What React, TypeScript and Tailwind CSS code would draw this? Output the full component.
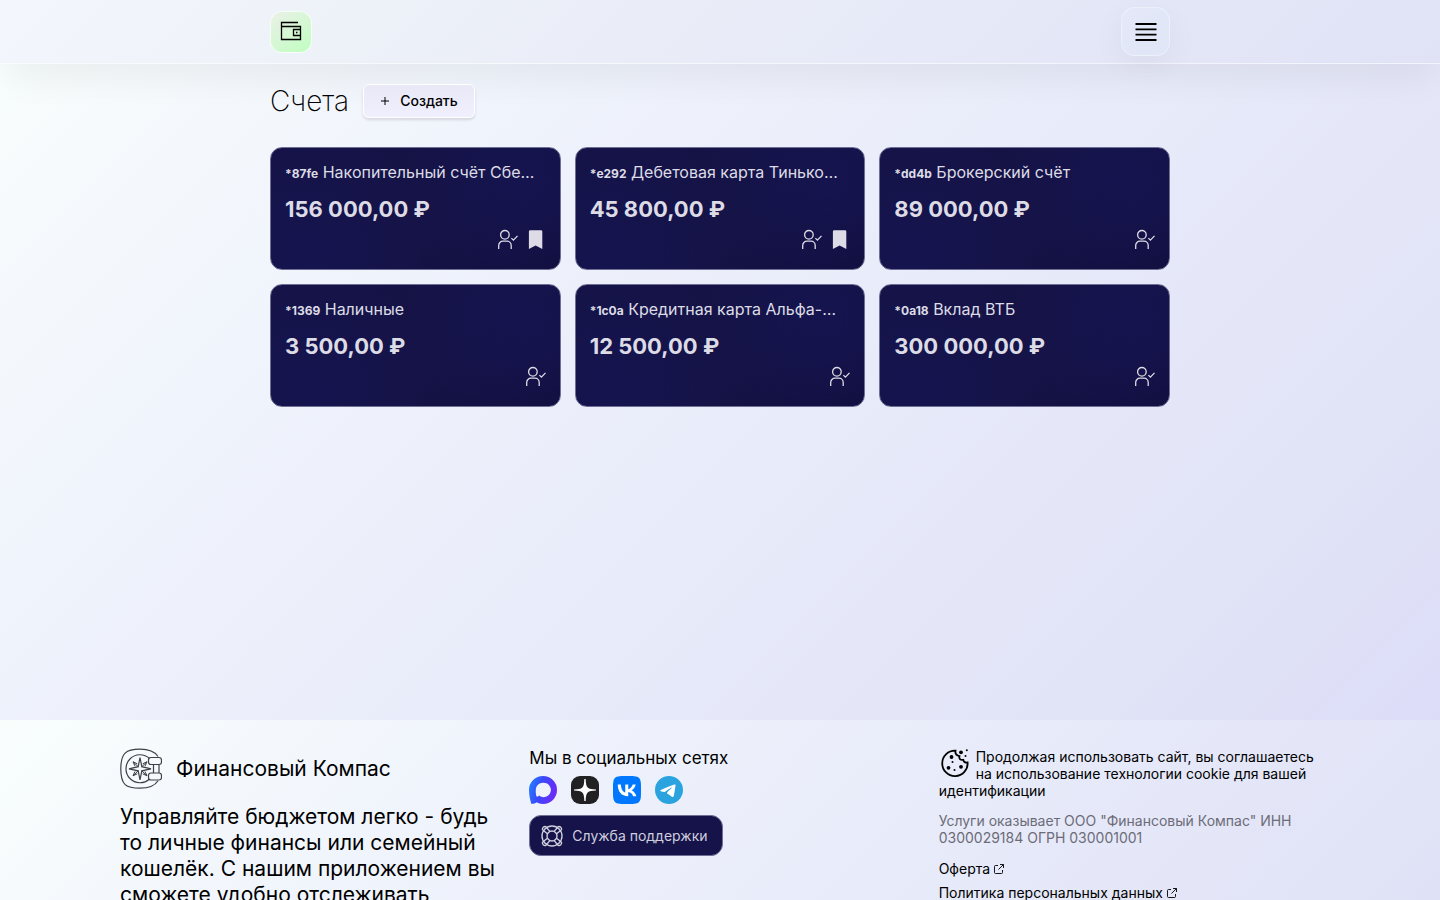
import React from 'react';
import { SiTelegram, SiVk } from 'react-icons/si';

interface Account {
  code: string;
  name: string;
  amount: string;
  saved?: boolean;
}

const accounts: Account[] = [
  { code: '87fe', name: 'Накопительный счёт Сбе…', amount: '156 000,00 ₽', saved: true },
  { code: 'e292', name: 'Дебетовая карта Тинько…', amount: '45 800,00 ₽', saved: true },
  { code: 'dd4b', name: 'Брокерский счёт', amount: '89 000,00 ₽' },
  { code: '1369', name: 'Наличные', amount: '3 500,00 ₽' },
  { code: '1c0a', name: 'Кредитная карта Альфа-…', amount: '12 500,00 ₽' },
  { code: '0a18', name: 'Вклад ВТБ', amount: '300 000,00 ₽' },
];

const WalletIcon = () => (
  <svg className="w-[22px] h-[22px] mb-0.5" viewBox="0 0 22 22" fill="none" stroke="currentColor" strokeWidth="1.3">
    <path d="M18 2.500H1.500v17h19v-13h-19M20.500 9.500h-7v6h7" />
    <path d="M16 12.500h1.500" />
  </svg>
);

const MenuIcon = () => (
  <svg className="w-6 h-6" viewBox="0 0 24 24" fill="none" stroke="currentColor" strokeWidth="1.8">
    <path d="M1.500 4h21M1.500 9.300h21M1.500 14.700h21M1.500 20h21" />
  </svg>
);

const UserCheckIcon = () => (
  <svg className="w-5 h-5" viewBox="0 0 20 20" fill="none" stroke="currentColor" strokeWidth="1.3">
    <circle cx="6.900" cy="5.800" r="4.300" />
    <path d="M.7 20v-3.600a4.200 4.200 0 0 1 4.200-4.200h4.100a4.200 4.200 0 0 1 4.200 4.200V20" />
    <path d="m13.400 9.100 2 2 4.100-4.200" />
  </svg>
);

const BookmarkIcon = () => (
  <svg className="w-5 h-5" viewBox="0 0 20 20" fill="currentColor">
    <path d="M4.100 1.300h11q1.200 0 1.200 1.200v17.400l-6.700-3.400-6.700 3.400V2.500q0-1.200 1.200-1.200z" />
  </svg>
);

const SafeLogo = () => (
  <svg className="w-[42px] h-[42px]" viewBox="0 0 42 42" fill="none" stroke="#3f3f46" strokeWidth="1.2">
    <path d="M38 8.500C34 2.500 27 1.200 20 1.200 6 1.200.8 5 .8 21S6 40.200 20 40.200c7 0 14-1 18-7.500" />
    <path d="M29.500 10.500A14 14 0 1 0 29.500 31" />
    <path d="M31 9.500h8q2.500 0 2.500 2.500v2q0 2.500-2.500 2.500h-8q-2.500 0-2.500-2.500v-2q0-2.500 2.500-2.500zM31 25h8q2.500 0 2.500 2.500v2q0 2.500-2.500 2.500h-8q-2.500 0-2.500-2.500v-2Q28.500 25 31 25zM33.500 16.500V25M39 16.500V25" />
    <path d="m20 9.500 1.800 9.200L31 20.800l-9.200 2L20 32l-1.800-9.200-9.200-2 9.200-2.100z" />
    <path d="m13 13.800 5.200 4.900M13 13.800l4.300 2M13 13.800l2 4.300M27 13.800l-5.200 4.900M27 13.800l-4.300 2M27 13.800l-2 4.300M13 27.800l5.200-5M13 27.800l4.300-2M13 27.800l2-4.300M27 27.800l-5.200-5M27 27.800l-4.300-2M27 27.800l-2-4.300" strokeWidth="1" />
  </svg>
);

const MaxIcon = () => (
  <svg className="w-7 h-7" viewBox="0 0 28 28">
    <defs>
      <linearGradient id="max-fill" x1="0" y1="0" x2="1" y2="0.3">
        <stop offset="0" stopColor="#1f8aff" />
        <stop offset="0.5" stopColor="#3a48fb" />
        <stop offset="1" stopColor="#6a2cf8" />
      </linearGradient>
    </defs>
    <path
      fill="url(#max-fill)"
      fillRule="evenodd"
      d="M14 0a14 14 0 1 1 0 28c-3 0-4.600-.5-6.200-1.700C6.500 27.500 4.200 28 2.400 28 1.500 25 0 20 0 14A14 14 0 0 1 14 0zm0 6.800c-4 0-7 3.100-7.200 7-.2 3 .3 6.700 1.300 7 .6.100 1.500-.6 2.100-1.200a7.200 7.200 0 1 0 3.800-12.800z"
    />
  </svg>
);

const DzenIcon = () => (
  <svg className="w-7 h-7" viewBox="0 0 28 28">
    <rect width="28" height="28" rx="9" fill="#212124" />
    <path fill="#fff" d="M13.300 3h1.400c.1 4.500.5 7 2 8.600 1.600 1.500 4 1.900 8.300 2v.9c-4.300.1-6.700.5-8.300 2-1.500 1.600-1.900 4-2 8.500h-1.400c-.1-4.500-.5-6.900-2-8.500-1.600-1.500-4-1.900-8.300-2v-.9c4.300-.1 6.700-.5 8.300-2 1.500-1.600 1.900-4.100 2-8.600z" />
  </svg>
);

const LifebuoyIcon = () => (
  <svg className="w-6 h-6" viewBox="0 0 24 24" fill="none" stroke="currentColor" strokeWidth="1.400">
    <circle cx="12" cy="12" r="10" />
    <circle cx="12" cy="12" r="5" />
    <path d="M7.400 9.800 2.800 6Q1.800 5 3 3.600q1.800-1.800 3-.8l3.800 4.600M16.600 9.800 21.200 6q1-1-.2-2.400-1.800-1.800-3-.8l-3.800 4.600M7.400 14.200 2.800 18q-1 1 .2 2.400 1.800 1.800 3 .8l3.800-4.600M16.600 14.200l4.600 3.800q1 1-.2 2.400-1.800 1.800-3 .8l-3.800-4.600" />
  </svg>
);

const CookieIcon = () => (
  <svg className="w-[30px] h-[30px]" viewBox="0 0 30 30" fill="none" stroke="currentColor" strokeWidth="1.800">
    <path d="M16.500 2.700A12.700 12.700 0 1 0 28.600 14.500c-2.200.5-4-.6-4.300-2.700-3.100.5-4.500-1.200-3.800-3.700-2.800-.5-4.500-2.600-4-5.400z" />
    <g fill="currentColor" stroke="none">
      <circle cx="12.500" cy="9" r="1.900" />
      <circle cx="9.500" cy="19.800" r="1.900" />
      <circle cx="22" cy="18.800" r="1.900" />
      <circle cx="22" cy="4.300" r="1.900" />
      <circle cx="27.800" cy="2.200" r="1" />
      <circle cx="26.500" cy="8" r="1" />
      <circle cx="13.500" cy="14" r="1" />
      <circle cx="15.500" cy="22" r="1" />
    </g>
  </svg>
);

const ExternalIcon = () => (
  <svg className="w-2.5 h-2.5" viewBox="0 0 10 10" fill="none" stroke="currentColor" strokeWidth="0.9">
    <path d="M4 1.500H1.500q-1 0-1 1v6q0 1 1 1h6q1 0 1-1V6M6 .5h3.500V4M9.500.5l-5 5" />
  </svg>
);

const AccountCard: React.FC<{ account: Account }> = ({ account }) => (
  <a
    href="#account"
    className="block min-w-0 h-[123px] p-[14px] rounded-xl border border-[#6f6e94] text-[#dddce6] bg-[radial-gradient(circle_at_88%_28%,#15144f_0%,transparent_45%),radial-gradient(circle_at_12%_85%,#15144f_0%,transparent_45%),linear-gradient(135deg,#151346_60%,#110d3c_100%)]"
  >
    <div className="truncate text-base leading-5">
      <b className="text-xs font-bold">*{account.code}</b> {account.name}
    </div>
    <div className="mt-[14px] text-[22px] leading-[26px] font-bold">{account.amount}</div>
    <div className="mt-[7px] flex justify-end gap-2">
      <UserCheckIcon />
      {account.saved && <BookmarkIcon />}
    </div>
  </a>
);

const App: React.FC = () => {
  return (
    <div className="h-screen overflow-hidden font-['Inter','Liberation_Sans',sans-serif] text-black">
      <div className="min-h-[80vh] bg-[linear-gradient(135deg,#f9fefd_0%,#f0f4fc_27%,#e7eaf9_60%,#dfe1f6_90%,#dcdcf9_100%)]">
        {/* Header */}
        <header className="h-16 border-b border-white/60 bg-[linear-gradient(135deg,#f3f7fd_0%,#edf1f8_25%,#e4e7f7_75%,#e0e3f6_100%)] shadow-[0_20px_36px_-6px_rgba(0,0,0,0.06)]">
          <div className="max-w-[900px] h-full mx-auto flex items-center justify-between">
            <a
              href="#home"
              aria-label="Главная"
              className="w-[42px] h-[42px] flex items-center justify-center rounded-xl border border-white/80 bg-[linear-gradient(145deg,#ebf0e8_0%,#c4fdc4_90%)]"
            >
              <WalletIcon />
            </a>
            <button
              type="button"
              aria-label="Меню"
              className="w-[49px] h-[49px] flex items-center justify-center rounded-[14px] border border-white/40 bg-[linear-gradient(135deg,#e5e8f8,#dfe6f6)] shadow-[0_8px_32px_rgba(0,0,0,0.05)]"
            >
              <MenuIcon />
            </button>
          </div>
        </header>

        {/* Accounts */}
        <main className="max-w-[900px] mx-auto pt-5">
          <div className="flex items-center gap-[14px] mb-[29px]">
            <h1 className="text-[28px] leading-8 font-extralight">Счета</h1>
            <button
              type="button"
              className="h-[34px] px-4 flex items-center gap-2.5 rounded-md border border-white bg-[linear-gradient(180deg,#e8e8f7,#f0effd)] text-sm font-medium shadow-[0_2px_3px_rgba(0,0,0,0.12)]"
            >
              <svg className="w-[10px] h-[10px]" viewBox="0 0 10 10" stroke="currentColor" strokeWidth="1">
                <path d="M5 1v8M1 5h8" />
              </svg>
              Создать
            </button>
          </div>
          <div className="grid grid-cols-3 gap-[14px]">
            {accounts.map((account) => (
              <AccountCard key={account.code} account={account} />
            ))}
          </div>
        </main>
      </div>

      {/* Footer */}
      <footer className="pt-7 pb-48 bg-[linear-gradient(135deg,#f9fefd_0%,#f0f4fc_27%,#e7eaf9_60%,#dfe1f6_90%,#dcdcf9_100%)]">
        <div className="max-w-[1200px] mx-auto grid grid-cols-3 gap-7">
          <div>
            <div className="flex items-center gap-[14px] text-[21px]">
              <SafeLogo />
              Финансовый Компас
            </div>
            <p className="mt-[14px] text-[21px] leading-[26px]">
              Управляйте бюджетом легко - будь то личные финансы или семейный кошелёк. С нашим
              приложением вы сможете удобно отслеживать
            </p>
          </div>

          <div>
            <div className="text-[17px] leading-5">Мы в социальных сетях</div>
            <div className="mt-2 flex gap-[14px]">
              <a href="#max" aria-label="MAX"><MaxIcon /></a>
              <a href="#dzen" aria-label="Дзен"><DzenIcon /></a>
              <a href="#vk" aria-label="ВКонтакте" className="rounded-lg bg-white">
                <SiVk className="w-7 h-7 text-[#0077ff]" />
              </a>
              <a href="#telegram" aria-label="Telegram" className="rounded-full bg-white">
                <SiTelegram className="w-7 h-7 text-[#2aa3df]" />
              </a>
            </div>
            <button
              type="button"
              className="mt-[11px] h-[41px] pl-[10px] pr-[14px] flex items-center gap-2 rounded-xl border border-[#6f6e94] bg-[#15134a] text-sm text-[#cfcede]"
            >
              <LifebuoyIcon />
              Служба поддержки
            </button>
          </div>

          <div className="text-sm leading-[17px]">
            <p>
              <span className="float-left mr-[7px]"><CookieIcon /></span>
              Продолжая использовать сайт, вы соглашаетесь на использование технологии cookie для
              вашей идентификации
            </p>
            <p className="mt-[13px] text-[#6c6c78]">
              Услуги оказывает ООО "Финансовый Компас" ИНН 0300029184 ОГРН 030001001
            </p>
            <a href="#offer" className="mt-[14px] flex items-center gap-1">
              Оферта <ExternalIcon />
            </a>
            <a href="#privacy" className="mt-[7px] flex items-center gap-1">
              Политика персональных данных <ExternalIcon />
            </a>
          </div>
        </div>
      </footer>
    </div>
  );
};

export default App;
